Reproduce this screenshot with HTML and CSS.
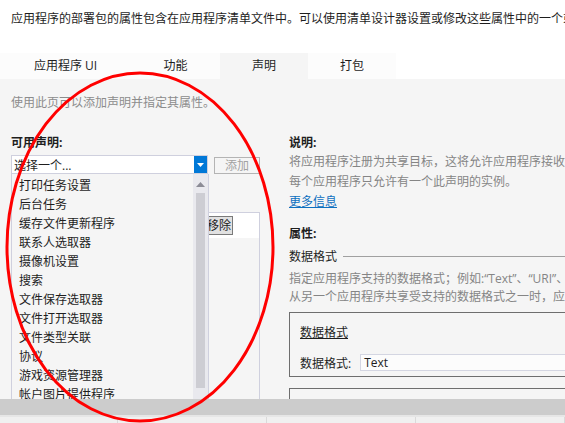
FILE: index.html
```html
<!DOCTYPE html>
<html lang="zh-CN">
<head>
    <meta charset="UTF-8">
    <title>Package.appxmanifest</title>
    <link rel="stylesheet" href="styles.css">
</head>
<body>

<p class="intro">应用程序的部署包的属性包含在应用程序清单文件中。可以使用清单设计器设置或修改这些属性中的一个或多个属性。</p>

<div class="tabs">
    <div class="tab tab-wide">应用程序 UI</div>
    <div class="tab">功能</div>
    <div class="tab active">声明</div>
    <div class="tab">打包</div>
</div>

<div class="content">
    <p class="hint">使用此页可以添加声明并指定其属性。</p>

    <div class="columns">
        <div class="left">
            <div class="label">可用声明:</div>
            <div class="picker">
                <div class="combo">
                    <span>选择一个...</span>
                    <span class="combo-btn">
                        <svg width="7" height="4" viewBox="0 0 7 4"><path d="M0 0h7L3.5 4z" fill="#fff"/></svg>
                    </span>
                </div>
                <button class="btn-add" disabled>添加</button>
            </div>

            <div class="declared">
                <div class="declared-row"><button class="btn-remove">移除</button></div>
            </div>

            <!-- open combo list -->
            <div class="dropdown">
                <ul>
                    <li>打印任务设置</li>
                    <li>后台任务</li>
                    <li>缓存文件更新程序</li>
                    <li>联系人选取器</li>
                    <li>摄像机设置</li>
                    <li>搜索</li>
                    <li>文件保存选取器</li>
                    <li>文件打开选取器</li>
                    <li>文件类型关联</li>
                    <li>协议</li>
                    <li>游戏资源管理器</li>
                    <li>帐户图片提供程序</li>
                </ul>
                <div class="scrollbar">
                    <svg class="arrow" width="9" height="5" viewBox="0 0 9 5"><path d="M0 5h9L4.5 0z" fill="#8c8c96"/></svg>
                    <div class="thumb"></div>
                </div>
            </div>
        </div>

        <div class="right">
            <div class="label">说明:</div>
            <p class="desc">将应用程序注册为共享目标，这将允许应用程序接收共享的内容。</p>
            <p class="desc">每个应用程序只允许有一个此声明的实例。</p>
            <a class="more" href="#">更多信息</a>

            <div class="label label-props">属性:</div>
            <div class="group-title">数据格式</div>
            <p class="note">指定应用程序支持的数据格式；例如:“Text”、“URI”、“Bitmap”、“HTML”、“StorageItems”或“RTF”。</p>
            <p class="note">从另一个应用程序共享受支持的数据格式之一时，应用程序将被激活。</p>

            <div class="box">
                <div class="box-title">数据格式</div>
                <div class="field">
                    <span>数据格式:</span>
                    <div class="input">Text</div>
                </div>
            </div>
            <div class="box box-next"></div>
        </div>
    </div>
</div>

<div class="statusbar"></div>
<div class="statusline">
    <span></span><span></span><span></span><span></span>
</div>

<svg class="circle" width="565" height="423" viewBox="0 0 565 423">
    <ellipse cx="140" cy="247" rx="133" ry="174" fill="none" stroke="#f00" stroke-width="3"/>
</svg>

</body>
</html>
```

FILE: styles.css
```css
body {
    font-family: "Open Sans", "Noto Sans CJK SC", sans-serif;
    font-size: 12px;
    color: #1e1e1e;
    background-color: #fff;
    margin: 0;
    width: 565px;
    height: 423px;
    overflow: hidden;
    position: relative;
}

p {
    margin: 0;
}

.intro {
    height: 53px;
    line-height: 37px;
    padding-left: 11px;
    white-space: nowrap;
}

.tabs {
    display: flex;
    height: 26px;
}

.tab {
    width: 88px;
    line-height: 26px;
    text-align: center;
    background-color: #fcfcfc;
}

.tab-wide {
    width: 131px;
}

.tab:nth-child(2) {
    width: 89px;
}

.tab.active {
    background-color: #f5f5f5;
}

.content {
    background-color: #f5f5f5;
    height: 320px;
    padding: 14px 0 0 11px;
    box-sizing: border-box;
    overflow: hidden;
}

.hint {
    color: #8c8c8c;
    line-height: 20px;
}

.columns {
    display: flex;
    margin-top: 20px;
}

.left {
    width: 249px;
    flex-shrink: 0;
    position: relative;
}

.label {
    font-weight: bold;
    line-height: 19px;
}

.picker {
    display: flex;
    align-items: center;
    margin-top: 3px;
}

.combo {
    width: 198px;
    height: 19px;
    box-sizing: border-box;
    border: 1px solid #cfd0de;
    background-color: #fff;
    display: flex;
    align-items: center;
    justify-content: space-between;
    padding-left: 2px;
}

.combo-btn {
    width: 13px;
    height: 17px;
    background-color: #0078d7;
    display: flex;
    align-items: center;
    justify-content: center;
}

.btn-add {
    font: inherit;
    color: #a2a2a2;
    background-color: #f5f5f5;
    border: 1px solid #b4b4b4;
    width: 46px;
    height: 17px;
    padding: 0;
    margin-left: 6px;
    margin-top: 1px;
    line-height: 15px;
}

.declared {
    margin-top: 38px;
    height: 200px;
    border: 1px solid #cfd0de;
    background-color: #f5f5f5;
}

.declared-row {
    height: 25px;
    background-color: #fff;
    display: flex;
    justify-content: flex-end;
    padding: 3px 26px 0 0;
    box-sizing: border-box;
}

.btn-remove {
    font: inherit;
    color: #1e1e1e;
    background-color: #e1e1e1;
    border: 1px solid #7a7a7a;
    height: 19px;
    width: 60px;
    padding: 0 1px 0 0;
    text-align: right;
    line-height: 16px;
}

.dropdown {
    position: absolute;
    top: 41px;
    left: 0;
    width: 198px;
    height: 250px;
    box-sizing: border-box;
    border: 1px solid #cfd0de;
    border-top: none;
    background-color: #f5f5f5;
}

.dropdown ul {
    list-style: none;
    margin: 0;
    padding: 2px 0 0 7px;
}

.dropdown li {
    line-height: 19px;
    white-space: nowrap;
}

.scrollbar {
    position: absolute;
    top: 0;
    right: 0;
    width: 15px;
    height: 100%;
    background-color: #e9e9ee;
    display: flex;
    flex-direction: column;
    align-items: center;
}

.scrollbar .arrow {
    margin-top: 8px;
}

.thumb {
    width: 9px;
    height: 195px;
    margin-top: 6px;
    background-color: #cdcdd3;
}

.right {
    margin-left: 29px;
    flex: 1;
    min-width: 0;
    white-space: nowrap;
}

.desc {
    color: #858585;
    line-height: 20px;
}

.more {
    display: block;
    line-height: 20px;
    color: #0e70c0;
}

.label-props {
    margin-top: 12px;
}

.group-title {
    display: flex;
    align-items: center;
    line-height: 19px;
    margin-top: 4px;
    margin-bottom: 4px;
}

.group-title::after {
    content: '';
    flex: 1;
    height: 1px;
    margin-left: 6px;
    background-color: #a0a0a0;
}

.note {
    color: #858585;
    line-height: 18px;
}

.box {
    width: 330px;
    margin-top: 6px;
    border: 1px solid #6e6e6e;
    padding: 11px 0 4px 10px;
    box-sizing: border-box;
}

.box-title {
    line-height: 18px;
    text-decoration: underline;
}

.field {
    display: flex;
    align-items: center;
    height: 19px;
    margin-top: 11px;
}

.input {
    margin-left: 9px;
    width: 260px;
    height: 17px;
    line-height: 15px;
    box-sizing: border-box;
    border: 1px solid #d4d6e2;
    background-color: #fcfcfc;
    padding-left: 3px;
}

.box-next {
    margin-top: 11px;
    height: 40px;
    padding: 0;
}

.statusbar {
    height: 16px;
    background-color: #cccccc;
    border-bottom: 2px solid #e6e6e6;
}

.statusline {
    height: 6px;
    background-color: #f0f0f0;
    display: flex;
}

.statusline span {
    width: 178px;
    border-right: 1px solid #dadada;
}

.statusline span:first-child {
    width: 140px;
}

.circle {
    position: absolute;
    top: 0;
    left: 0;
    pointer-events: none;
}
```
